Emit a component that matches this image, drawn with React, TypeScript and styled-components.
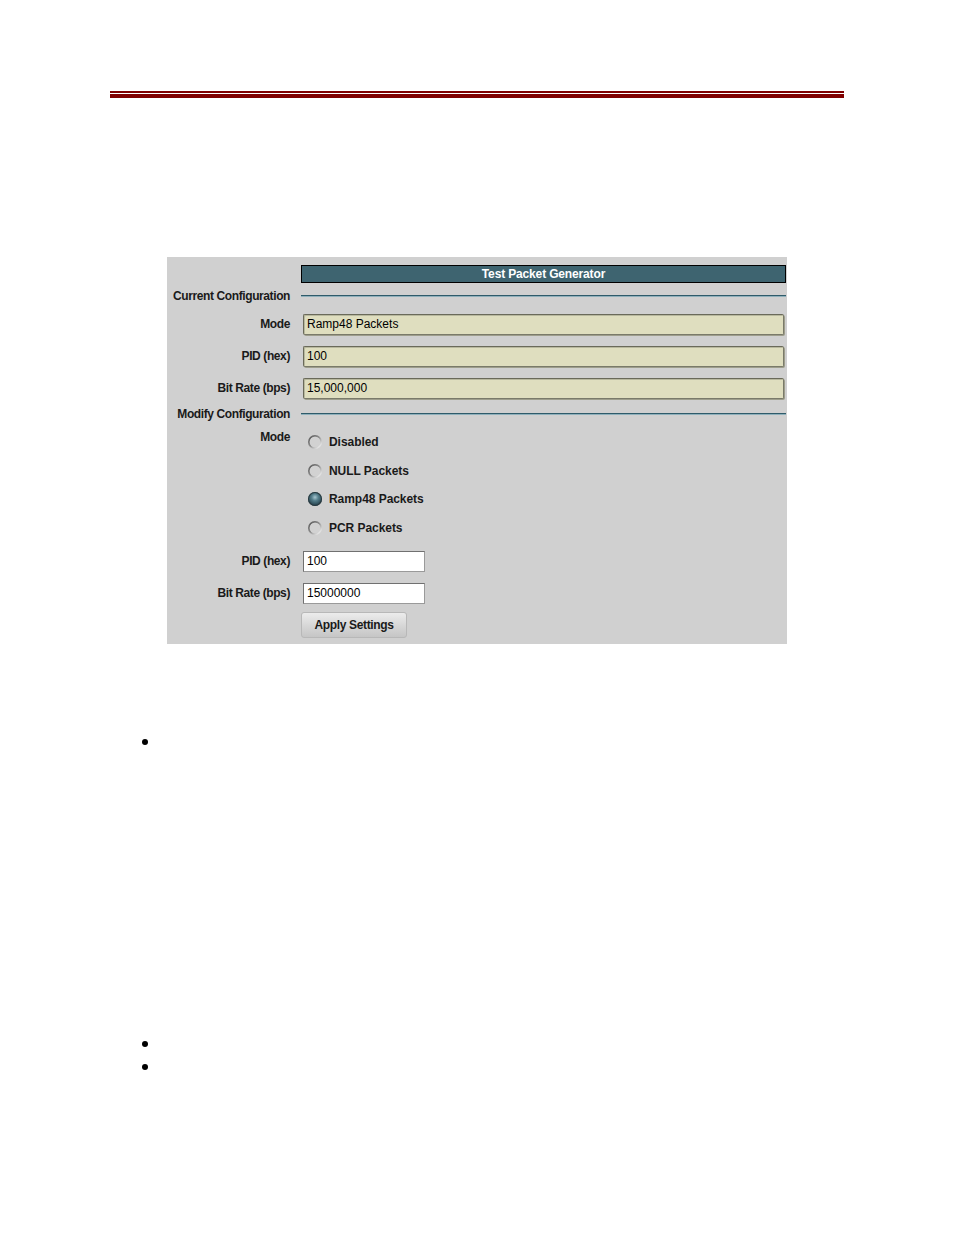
import React from "react";
import styled, { createGlobalStyle } from "styled-components";

const Global = createGlobalStyle`
  html, body { margin: 0; padding: 0; background: #ffffff; }
  body { font-family: "Liberation Sans", Arial, sans-serif; color: #000; }
`;

const Page = styled.div`
  width: 954px;
  min-height: 1235px;
  display: flex;
  flex-direction: column;
`;

const Rule = styled.div`
  margin: 91px 0 0 110px;
  width: 734px;
  display: flex;
  flex-direction: column;
  gap: 1px;
`;

const RuleLine = styled.div<{ $h: number }>`
  height: ${(p) => p.$h}px;
  background: #800000;
`;

const Panel = styled.div`
  margin: 159px 0 0 167px;
  width: 620px;
  box-sizing: border-box;
  padding: 8px 1px 6px 0;
  background: #d0d0d0;
  display: flex;
  flex-direction: column;
`;

const Row = styled.div<{ $h?: number; $top?: boolean }>`
  display: grid;
  grid-template-columns: 124px 485px;
  column-gap: 10px;
  align-items: ${(p) => (p.$top ? "start" : "center")};
  ${(p) => (p.$h ? `height: ${p.$h}px;` : "")}
`;

const Label = styled.div<{ $pt?: number }>`
  font-size: 12px;
  font-weight: bold;
  letter-spacing: -0.4px;
  color: #1a1a1a;
  text-align: right;
  white-space: nowrap;
  line-height: 14px;
  padding-right: 1px;
  padding-top: ${(p) => p.$pt ?? 0}px;
`;

const TitleBar = styled.div`
  grid-column: 2;
  height: 18px;
  box-sizing: border-box;
  border: 1px solid #000;
  background: #3e6470;
  color: #fff;
  font-size: 12px;
  font-weight: bold;
  letter-spacing: -0.15px;
  line-height: 16px;
  text-align: center;
`;

const SectionLine = styled.div`
  height: 1px;
  background: #2f5b6a;
  border-bottom: 1px solid #8fb0bb;
`;

const ReadField = styled.div`
  margin-left: 2px;
  width: 481px;
  height: 21px;
  box-sizing: border-box;
  background: #dfdebf;
  border: 1px solid #7a7a6a;
  border-top-color: #6a6a5a;
  border-left-color: #6a6a5a;
  box-shadow: inset 1px 1px 0 #b8b89e, 1px 1px 0 #9e9e8c;
  border-radius: 2px;
  font-size: 12px;
  line-height: 19px;
  padding-left: 3px;
  color: #000;
`;

const TextInput = styled.input`
  margin-left: 2px;
  width: 122px;
  height: 21px;
  box-sizing: border-box;
  background: #fff;
  border: 1px solid #9a9a9a;
  border-top-color: #707070;
  border-left-color: #707070;
  font-family: "Liberation Sans", Arial, sans-serif;
  font-size: 12px;
  padding: 0 0 0 3px;
  color: #000;
  outline: none;
`;

const RadioList = styled.div`
  display: flex;
  flex-direction: column;
  padding-top: 4px;
  padding-bottom: 3px;
`;

const RadioItem = styled.label`
  display: flex;
  align-items: center;
  height: 28.5px;
  gap: 7px;
  padding-left: 7px;
  font-size: 12px;
  font-weight: bold;
  letter-spacing: -0.05px;
  color: #1a1a1a;
`;

const RadioDot = styled.span<{ $on?: boolean }>`
  width: 14px;
  height: 14px;
  border-radius: 50%;
  box-sizing: border-box;
  flex-shrink: 0;
  background: ${(p) =>
    p.$on
      ? "radial-gradient(circle at 50% 38%, #a8c6d0 0%, #557f8c 30%, #27444f 70%, #15262d 100%)"
      : "radial-gradient(circle at 50% 50%, #d2d2d2 0%, #d2d2d2 50%, transparent 58%), linear-gradient(135deg, #4e4e4e 0%, #8a8a8a 45%, #e0e0e0 80%, #f4f4f4 100%)"};
  box-shadow: ${(p) => (p.$on ? "inset 0 0 0 1px #2a3a40" : "none")};
`;

const Button = styled.button`
  margin-top: 3px;
  width: 106px;
  height: 26px;
  box-sizing: border-box;
  border: 1px solid #b8b8b8;
  border-radius: 3px;
  background: linear-gradient(#ececec, #d8d8d8 50%, #c6c6c6);
  font-family: "Liberation Sans", Arial, sans-serif;
  font-size: 12px;
  font-weight: bold;
  letter-spacing: -0.35px;
  color: #1a1a1a;
  padding: 0;
`;

const Bullets = styled.ul<{ $mt: number }>`
  list-style: none;
  margin: ${(p) => p.$mt}px 0 0 0;
  padding: 0;
  display: flex;
  flex-direction: column;
`;

const Bullet = styled.li`
  height: 23px;
  display: flex;
  align-items: center;
  padding-left: 142px;
  &::before {
    content: "";
    width: 6px;
    height: 6px;
    border-radius: 50%;
    background: #000;
  }
`;

const modes = ["Disabled", "NULL Packets", "Ramp48 Packets", "PCR Packets"];

export default function App() {
  return (
    <Page>
      <Global />
      <Rule>
        <RuleLine $h={2} />
        <RuleLine $h={4} />
      </Rule>

      <Panel>
        <Row>
          <span />
          <TitleBar>Test Packet Generator</TitleBar>
        </Row>
        <Row $h={25}>
          <Label>Current Configuration</Label>
          <SectionLine />
        </Row>
        <Row $h={32}>
          <Label>Mode</Label>
          <ReadField>Ramp48 Packets</ReadField>
        </Row>
        <Row $h={32}>
          <Label>PID (hex)</Label>
          <ReadField>100</ReadField>
        </Row>
        <Row $h={32}>
          <Label>Bit Rate (bps)</Label>
          <ReadField>15,000,000</ReadField>
        </Row>
        <Row $h={20}>
          <Label>Modify Configuration</Label>
          <SectionLine />
        </Row>
        <Row $top>
          <Label $pt={6}>Mode</Label>
          <RadioList>
            {modes.map((m) => (
              <RadioItem key={m}>
                <RadioDot $on={m === "Ramp48 Packets"} />
                {m}
              </RadioItem>
            ))}
          </RadioList>
        </Row>
        <Row $h={32}>
          <Label>PID (hex)</Label>
          <TextInput defaultValue="100" />
        </Row>
        <Row $h={32}>
          <Label>Bit Rate (bps)</Label>
          <TextInput defaultValue="15000000" />
        </Row>
        <Row $top>
          <span />
          <Button>Apply Settings</Button>
        </Row>
      </Panel>

      <Bullets $mt={86}>
        <Bullet />
      </Bullets>
      <Bullets $mt={279}>
        <Bullet />
        <Bullet />
      </Bullets>
    </Page>
  );
}
